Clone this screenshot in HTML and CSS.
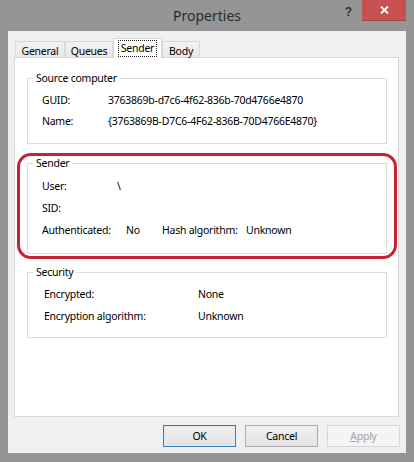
FILE: index.html
```html
<!DOCTYPE html>
<html lang="en">
<head>
<meta charset="utf-8">
<title>Properties</title>
<link rel="stylesheet" href="styles.css">
</head>
<body>
<div class="window">
  <div class="titlebar">
    <div class="tb-side"></div>
    <div class="title">Properties</div>
    <div class="tb-side tb-controls">
      <span class="help">?</span>
      <span class="close"><svg width="9" height="8" viewBox="0 0 9 8"><path d="M1 0.5 L8 7.5 M8 0.5 L1 7.5" stroke="#fff" stroke-width="1.8" fill="none"/></svg></span>
    </div>
  </div>
  <div class="client">
    <div class="tabs">
      <div class="tab tab-general">General</div>
      <div class="tab tab-queues">Queues</div>
      <div class="tab tab-sender selected"><span class="focus">Sender</span></div>
      <div class="tab tab-body">Body</div>
    </div>
    <div class="panel">
      <fieldset class="group source">
        <legend>Source computer</legend>
        <div class="row"><span class="lbl w-guid">GUID:</span><span>3763869b-d7c6-4f62-836b-70d4766e4870</span></div>
        <div class="row"><span class="lbl w-guid">Name:</span><span>{3763869B-D7C6-4F62-836B-70D4766E4870}</span></div>
      </fieldset>
      <div class="highlight">
        <fieldset class="group sender">
          <legend>Sender</legend>
          <div class="row"><span class="lbl w-user">User:</span><span>\</span></div>
          <div class="row"><span class="lbl w-user">SID:</span><span></span></div>
          <div class="row"><span class="lbl w-auth">Authenticated:</span><span class="lbl w-no">No</span><span class="lbl w-hash">Hash algorithm:</span><span>Unknown</span></div>
        </fieldset>
      </div>
      <fieldset class="group security">
        <legend>Security</legend>
        <div class="row"><span class="lbl w-enc">Encrypted:</span><span>None</span></div>
        <div class="row"><span class="lbl w-enc">Encryption algorithm:</span><span>Unknown</span></div>
      </fieldset>
    </div>
    <div class="buttons">
      <button class="btn default">OK</button>
      <button class="btn">Cancel</button>
      <button class="btn disabled"><u>A</u>pply</button>
    </div>
  </div>
</div>
</body>
</html>
```

FILE: styles.css
```css
* { box-sizing: border-box; }
html, body { margin: 0; padding: 0; }
body {
  background: #929292;
  font-family: "Noto Sans", "Liberation Sans", sans-serif;
  font-size: 10.5px;
  letter-spacing: -0.25px;
  color: #000;
}
.window {
  width: 414px;
  height: 462px;
  background: #959595;
  display: flex;
  flex-direction: column;
}
.titlebar {
  height: 31px;
  display: grid;
  grid-template-columns: 1fr auto 1fr;
  align-items: start;
}
.title {
  font-size: 14px;
  letter-spacing: 0;
  color: #2b2b2b;
  line-height: 31px;
  padding-top: 0;
}
.tb-controls {
  display: flex;
  justify-content: flex-end;
  align-items: flex-start;
  padding-right: 8px;
}
.help {
  font-family: "Liberation Sans", sans-serif;
  font-weight: bold;
  font-size: 12px;
  color: #333;
  line-height: 12px;
  margin-top: 6px;
  margin-right: 10px;
  letter-spacing: 0;
}
.close {
  width: 44px;
  height: 21px;
  background: #c75050;
  border-bottom: 1px solid #b04040;
  display: flex;
  align-items: center;
  justify-content: center;
}
.client {
  margin: 0 8px 9px 8px;
  height: 422px;
  background: #f0f0f0;
  padding: 7px 7px 6px 6px;
  display: flex;
  flex-direction: column;
}
.tabs {
  display: flex;
  align-items: flex-end;
  height: 19px;
  padding-left: 1px;
  position: relative;
  z-index: 1;
}
.tab {
  height: 16px;
  border: 1px solid #d9d9d9;
  border-bottom: none;
  background: linear-gradient(#f2f2f2, #e9e9e9);
  text-align: center;
  line-height: 16px;
  padding-top: 1px;
}
.tab-general { width: 50px; }
.tab-queues { width: 48px; }
.tab-sender { width: 49px; }
.tab-body { width: 38px; }
.tab.selected {
  height: 20px;
  margin-bottom: -1px;
  background: #fff;
  padding-top: 1px;
  line-height: 16px;
}
.focus {
  display: inline-block;
  border: 1px dotted #222;
  padding: 0 2px;
  line-height: 15px;
}
.panel {
  height: 360px;
  background: #fff;
  border: 1px solid #d9d9d9;
  padding: 13px 11px 0 12px;
}
.group {
  margin: 0;
  border: 1px solid #dcdcdc;
  padding: 5px 0 11px 5px;
  min-width: 0;
}
.group legend {
  padding: 0 3px;
  line-height: 14px;
}
.row {
  display: flex;
  height: 21px;
  line-height: 21px;
  padding-left: 9px;
  white-space: nowrap;
}
.lbl { flex: none; }
.w-guid { width: 66px; }
.w-user { width: 75px; }
.w-auth { width: 84px; }
.w-no { width: 36px; }
.w-hash { width: 84px; }
.w-enc { width: 154px; }
.highlight {
  margin: 9px -10px 0 -10px;
  border: 3px solid #c42334;
  border-radius: 14px;
  padding: 0 7px 2px 7px;
}
.sender { padding: 5px 0 12px 5px; }
.sender .row { height: 22px; line-height: 22px; }
.security { margin-top: 6px; padding: 4px 0 10px 5px; }
.security .row { height: 22px; line-height: 22px; padding-left: 11px; }
.buttons {
  display: flex;
  justify-content: flex-end;
  gap: 9px;
  margin-top: 8px;
  margin-right: -1px;
}
.btn {
  width: 73px;
  height: 22px;
  font-family: inherit;
  font-size: 10.5px;
  letter-spacing: -0.25px;
  color: #000;
  background: linear-gradient(#efefef, #e3e3e3);
  border: 1px solid #acacac;
  border-radius: 0;
  padding: 0;
  margin: 0;
}
.btn.default {
  border-color: #3c7fb1;
  box-shadow: inset 0 0 0 1px #dbeaf7;
}
.btn.disabled {
  background: #f4f4f4;
  border-color: #d5d5d5;
  color: #a3a3a3;
}
```
